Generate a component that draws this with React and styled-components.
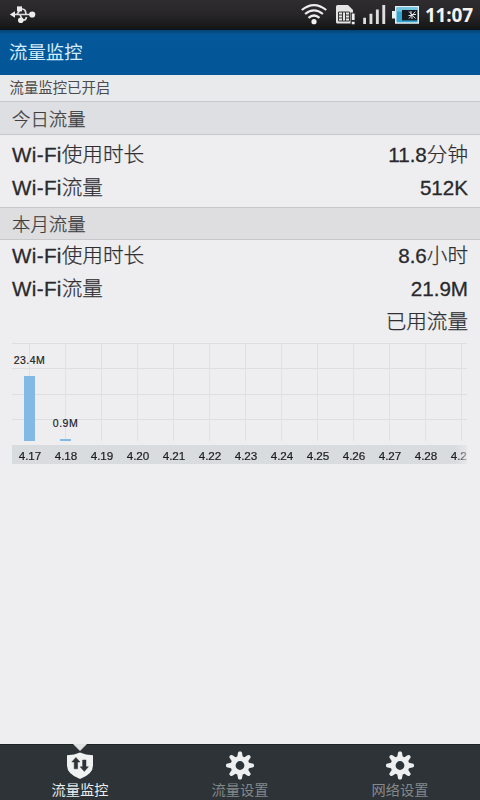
import styled, { createGlobalStyle } from "styled-components";
import { useState } from "react";

const days = [
  { day: "4.17", label: "23.4M", height: 65 },
  { day: "4.18", label: "0.9M", height: 2 },
  { day: "4.19" },
  { day: "4.20" },
  { day: "4.21" },
  { day: "4.22" },
  { day: "4.23" },
  { day: "4.24" },
  { day: "4.25" },
  { day: "4.26" },
  { day: "4.27" },
  { day: "4.28" },
  { day: "4.29" },
];

const tabs = [
  { name: "流量监控", icon: "shield" },
  { name: "流量设置", icon: "gear" },
  { name: "网络设置", icon: "gear" },
];

const GlobalStyle = createGlobalStyle`
  * {
    box-sizing: border-box;
  }
  body {
    margin: 0;
    background: #eeeef0;
    font-family: "Liberation Sans", "Noto Sans CJK SC", sans-serif;
  }
`;

const Screen = styled.div`
  display: flex;
  flex-direction: column;
  width: 480px;
  height: 800px;
  overflow: hidden;
  background: #eeeef0;
  white-space: nowrap;
`;

//top bars
const StatusBar = styled.div`
  display: flex;
  align-items: center;
  flex: none;
  height: 30px;
  padding: 0 7px 0 9px;
  background: linear-gradient(#302d30, #272527 50%, #171718 92%, #071522);
`;
const StatusIcons = styled.div`
  display: flex;
  margin-left: auto;
`;
const Clock = styled.div`
  width: 49px;
  margin-left: 4px;
  color: #f4f4f4;
  font: bold 19px/30px "Open Sans", "Noto Sans", sans-serif;
  letter-spacing: -0.15px;
  text-align: right;
`;
const Header = styled.div`
  flex: none;
  height: 45px;
  padding-left: 9px;
  background: linear-gradient(#064372, #04589a 10%, #035799);
  color: #d5ecfa;
  font-size: 18.4px;
  line-height: 45px;
`;
const Notice = styled.div`
  flex: none;
  height: 26px;
  padding-left: 9.5px;
  background: #e9eaec;
  color: #4b4b4d;
  font-size: 14.4px;
  line-height: 27px;
`;

//usage lists
const SectionTitle = styled.div`
  flex: none;
  height: ${(props) => props.$height}px;
  padding-left: 12px;
  border-top: 1px solid #c6c8ca;
  border-bottom: 1px solid #c6c8ca;
  background: ${(props) => props.$color};
  color: #3e3e40;
  font-size: 18.4px;
  font-weight: 300;
  line-height: ${(props) => props.$height + 1}px;
  -webkit-text-stroke: 0.25px #3e3e40;
`;
const Rows = styled.div`
  flex: none;
  padding: ${(props) => props.$pad};
`;
const Row = styled.div`
  display: flex;
  justify-content: space-between;
  height: 33px;
  color: #303033;
  font-size: 20.6px;
  font-weight: 300;
  line-height: 32px;
  -webkit-text-stroke: 0.25px #303033;
`;
const Latin = styled.span`
  color: #29292c;
  font-weight: 400;
  letter-spacing: ${(props) => props.$spacing || 0}px;
  -webkit-text-stroke: 0.3px #29292c;
`;

//chart
const Chart = styled.div`
  flex: none;
  width: 455px;
  margin: 4px 0 0 12px;
  overflow: hidden;
`;
const Plot = styled.div`
  display: flex;
  height: 98px;
  border-top: 1px solid #dedee0;
  background: linear-gradient(
      transparent 24px,
      #dedee1 24px 25px,
      transparent 25px 50px,
      #dedee1 50px 51px,
      transparent 51px 75px,
      #dedee1 75px 76px,
      transparent 76px
    );
`;
const Column = styled.div`
  display: flex;
  flex: none;
  flex-direction: column;
  align-items: center;
  justify-content: flex-end;
  width: 36px;
  padding-right: 1px;
  background: linear-gradient(#e1e1e4, #e1e1e4) 17px 0 / 1px 100% no-repeat;
`;
const BarLabel = styled.div`
  margin-bottom: 9px;
  color: #1d1d1f;
  font-size: 10.5px;
  letter-spacing: 0.5px;
  line-height: 13px;
  -webkit-text-stroke: 0.2px #1d1d1f;
`;
const Bar = styled.div`
  width: 11px;
  background: #83b9e5;
`;
const Axis = styled.div`
  display: flex;
  height: 19px;
  margin-top: 4px;
  background: #d9dcdf;
  mask-image: linear-gradient(90deg, #000 443px, transparent 462px);
`;
const Day = styled.div`
  flex: none;
  width: 36px;
  color: #1c1d1f;
  font-size: 11.7px;
  line-height: 21px;
  text-align: center;
  -webkit-text-stroke: 0.2px #1c1d1f;
`;

//bottom tabs
const TabBar = styled.div`
  display: flex;
  flex: none;
  height: 56px;
  margin-top: auto;
  background: #2d3337;
  border-top: 1px solid #1d2225;
`;
const Tab = styled.button`
  position: relative;
  display: flex;
  flex: 1;
  flex-direction: column;
  align-items: center;
  padding: 5px 0 0;
  border: 0;
  background: none;
  color: ${(props) => (props.$active ? "#eceeef" : "#85898b")};
  font-family: inherit;
  font-size: 14.2px;
  line-height: 20px;
`;
const Pointer = styled.div`
  position: absolute;
  top: -1px;
  border: 7px solid transparent;
  border-top-color: #dfe1e2;
  border-bottom: 0;
`;
const TabIcon = styled.svg`
  display: block;
  flex: none;
`;

function gearPath() {
  let d = "";
  for (let i = 0; i < 8; i++) {
    [
      [-17, 9.4],
      [-8, 13.3],
      [-4, 14],
      [4, 14],
      [8, 13.3],
      [17, 9.4],
    ].forEach(([angle, r], j) => {
      const a = ((i * 45 + angle) * Math.PI) / 180;
      const x = (15 + r * Math.sin(a)).toFixed(2);
      const y = (15.5 - r * Math.cos(a)).toFixed(2);
      d += `${i === 0 && j === 0 ? "M" : "L"}${x} ${y}`;
    });
  }
  return d + "ZM15 11.1a4.4 4.4 0 1 0 0 8.8a4.4 4.4 0 1 0 0-8.8Z";
}

function Icon({ type }) {
  return (
    <TabIcon width="30" height="30" viewBox="0 0 30 30">
      {type === "gear" ? (
        <path d={gearPath()} fill="#eceef0" fillRule="evenodd" />
      ) : (
        <>
          <path
            d="M15 2.6Q20.5 5.2 28 5.2V15.5Q28 24 15 29Q2 24 2 15.5V5.2Q9.5 5.2 15 2.6Z"
            fill="#f0f2f2"
          />
          <path
            d="M10.9 7.4L15 12H12.6V18.8H9.2V12H6.8ZM19.3 21.4L15.2 16.8H17.6V10H21V16.8H23.4Z"
            fill="#2d3337"
            stroke="#2d3337"
            strokeWidth="0.5"
            strokeLinejoin="round"
          />
        </>
      )}
    </TabIcon>
  );
}

function UsbIcon() {
  return (
    <svg width="28" height="20" viewBox="0 0 28 20">
      <g fill="none" stroke="#dedede" strokeWidth="1.7">
        <path d="M5 9.5H23M7 9.5C10 9.5 9 4 13 4C16 4 16.5 5.5 17 9M10 9.5C13 9.5 11 15 15 15Q17 15 17.5 12" />
      </g>
      <g fill="#ededed">
        <path d="M.8 9.5L6 6.2V12.8Z" />
        <rect x="8" y="1.4" width="5" height="5" />
        <circle cx="11.8" cy="15.2" r="2.8" />
        <circle cx="23.2" cy="9.5" r="3.1" />
      </g>
    </svg>
  );
}

function SystemIcons() {
  return (
    <svg width="119" height="30" viewBox="0 0 119 30">
      {/* wifi */}
      <g fill="none" stroke="#ededed" strokeWidth="2.2">
        <path d="M.8 10Q13 .2 25.2 10M4.1 14Q13 6.6 21.9 14M7.5 17.8Q13 13.2 18.5 17.8" />
      </g>
      <circle cx="13" cy="21.7" r="2.6" fill="#f2f2f2" />
      {/* sim card */}
      <path d="M35 6.5Q35 5 36.5 5H47L52 10V23.5H36.5Q35 23.5 35 22Z" fill="#e4e4e4" />
      <path
        d="M37.5 12H48.5V21H37.5ZM37.5 15H41.5M37.5 18H41.5M44.5 15H48.5M44.5 18H48.5M41.5 12V21M44.5 12V21"
        fill="none"
        stroke="#353535"
        strokeWidth="1"
      />
      <path d="M49.5 12.5H54V24.5H49.5Z" fill="#292829" />
      <path d="M50.8 13.5H53.6V20H50.8ZM50.8 21.7H53.6V24.2H50.8Z" fill="#eee" />
      {/* signal */}
      <path
        d="M62.2 17.8H65V24H62.2ZM68.5 13.7H71.4V24H68.5ZM74.9 9.5H77.8V24H74.9ZM81.3 5H84.2V24H81.3Z"
        fill="#dedede"
      />
      {/* battery */}
      <path d="M94 6H118V23.8H94V18.5H91V11H94Z" fill="#e6f1f4" />
      <rect x="95.5" y="7.5" width="21" height="14.8" fill="#35a4ce" />
      <rect x="95.5" y="7.5" width="21" height="4" fill="#71c5df" />
      <rect x="101" y="10" width="15.3" height="10.4" fill="#151b21" />
      <path
        d="M108 11.5L114.5 18.5M114.5 11.5L108 18.5M110 11V14.5H115M107.5 15.5H111V19"
        fill="none"
        stroke="#dce4e8"
        strokeWidth="1"
      />
    </svg>
  );
}

function Usage({ name, value, unit }) {
  return (
    <Row>
      <span>
        {name && <Latin $spacing={0.35}>Wi-Fi</Latin>}
        {name}
      </span>
      <span>
        {value && <Latin>{value}</Latin>}
        {unit}
      </span>
    </Row>
  );
}

export default function App() {
  const [active, setActive] = useState(0);

  return (
    <Screen>
      <GlobalStyle />
      <StatusBar>
        <UsbIcon />
        <StatusIcons>
          <SystemIcons />
        </StatusIcons>
        <Clock>11:07</Clock>
      </StatusBar>
      <Header>流量监控</Header>
      <Notice>流量监控已开启</Notice>

      <SectionTitle $height={34} $color="#dddfe2">
        今日流量
      </SectionTitle>
      <Rows $pad="4px 12px 2px">
        <Usage name="使用时长" value="11.8" unit="分钟" />
        <Usage name="流量" value="512K" />
      </Rows>
      <SectionTitle $height={33} $color="#dedee0">
        本月流量
      </SectionTitle>
      <Rows $pad="0 12px">
        <Usage name="使用时长" value="8.6" unit="小时" />
        <Usage name="流量" value="21.9M" />
        <Usage unit="已用流量" />
      </Rows>

      {/* daily chart */}
      <Chart>
        <Plot>
          {days.map((item) => (
            <Column key={item.day}>
              {item.label && <BarLabel>{item.label}</BarLabel>}
              {item.height && <Bar style={{ height: item.height }} />}
            </Column>
          ))}
        </Plot>
        <Axis>
          {days.map((item) => (
            <Day key={item.day}>{item.day}</Day>
          ))}
        </Axis>
      </Chart>

      <TabBar>
        {tabs.map((tab, index) => (
          <Tab
            key={tab.name}
            $active={active === index}
            onClick={() => setActive(index)}
          >
            {active === index && <Pointer />}
            <Icon type={tab.icon} />
            {tab.name}
          </Tab>
        ))}
      </TabBar>
    </Screen>
  );
}
